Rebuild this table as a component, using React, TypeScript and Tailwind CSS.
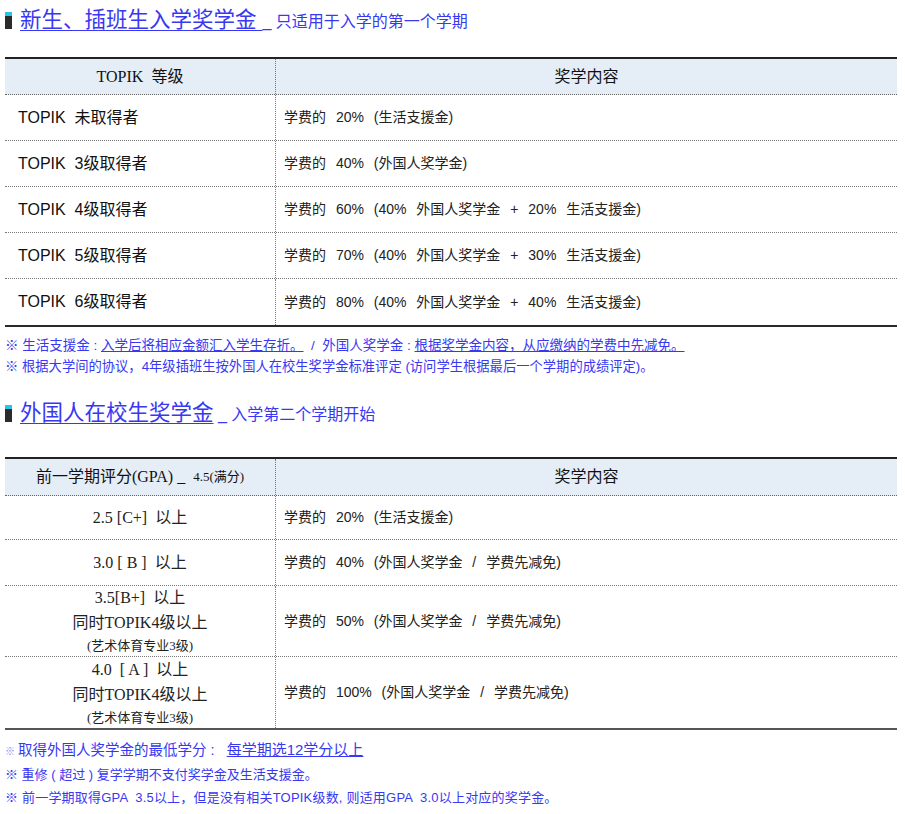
const sans = "font-['Liberation_Sans','Noto_Sans_CJK_SC',sans-serif]";
const serif = "font-['Liberation_Serif','Noto_Sans_CJK_SC',serif]";

const topikRows = [
    { level: "TOPIK  未取得者", content: "学费的 20% (生活支援金)" },
    { level: "TOPIK  3级取得者", content: "学费的 40% (外国人奖学金)" },
    { level: "TOPIK  4级取得者", content: "学费的 60% (40% 外国人奖学金 + 20% 生活支援金)" },
    { level: "TOPIK  5级取得者", content: "学费的 70% (40% 外国人奖学金 + 30% 生活支援金)" },
    { level: "TOPIK  6级取得者", content: "学费的 80% (40% 外国人奖学金 + 40% 生活支援金)" },
];

const gpaRows = [
    { lines: ["2.5 [C+]  以上"], content: "学费的 20% (生活支援金)", h: "h-[44px]" },
    { lines: ["3.0 [ B ]  以上"], content: "学费的 40% (外国人奖学金 / 学费先减免)", h: "h-[46px]" },
    { lines: ["3.5[B+]  以上", "同时TOPIK4级以上"], content: "学费的 50% (外国人奖学金 / 学费先减免)", h: "h-[71px]" },
    { lines: ["4.0  [ A ]  以上", "同时TOPIK4级以上"], content: "学费的 100% (外国人奖学金 / 学费先减免)", h: "h-[71px]" },
];

function SectionTitle({ title, sub }: { title: string; sub: string }) {
    return (
        <div className={`flex items-end text-[#3838f2] ${sans}`}>
            <div className="w-[7px] h-[17px] mr-2 mb-[5px] bg-[#2b2b2b] border-t-[4px] border-[#27c6e8]" />
            <span className="text-[21.5px] leading-[28px] underline underline-offset-[3px] decoration-1 whitespace-pre">{title}</span>
            <span className="text-[16px] leading-[24px] whitespace-pre">{sub}</span>
        </div>
    );
}

export default function App() {
    return (
        <div className={`w-[905px] h-[814px] bg-white px-[5px] pt-[6px] ${sans}`}>
            <SectionTitle title="新生、插班生入学奖学金 " sub="_ 只适用于入学的第一个学期" />

            <div className="w-[892px] mt-[23px] border-t-2 border-[#222] border-b-2 border-b-[#2a2a2a]">
                <div className="flex h-[36px] bg-[#e5edf7] border-b border-dotted border-[#666] text-[16px] text-[#111]">
                    <div className={`w-[271px] flex items-center justify-center border-r border-dotted border-[#777] whitespace-pre ${serif}`}>TOPIK  等级</div>
                    <div className="flex-1 flex items-center justify-center">奖学内容</div>
                </div>
                {topikRows.map((r, i) => (
                    <div key={i} className={`flex h-[46px] ${i < topikRows.length - 1 ? "border-b border-dotted border-[#777]" : ""}`}>
                        <div className="w-[271px] flex items-center pl-[13px] border-r border-dotted border-[#777] text-[16px] text-[#111] whitespace-pre">{r.level}</div>
                        <div className="flex-1 flex items-center pl-[8px] text-[14px] text-[#222] [word-spacing:6px]">{r.content}</div>
                    </div>
                ))}
            </div>

            <div className="mt-[8px] leading-[21px] text-[#3838f2]">
                <p className="text-[13.5px] whitespace-pre">
                    {"※ 生活支援金 : "}
                    <span className="underline">入学后将相应金额汇入学生存折。</span>
                    {"  /  外国人奖学金 : "}
                    <span className="underline">根据奖学金内容，从应缴纳的学费中先减免。</span>
                </p>
                <p className="text-[13.3px] whitespace-pre">※ 根据大学间的协议，4年级插班生按外国人在校生奖学金标准评定 (访问学生根据最后一个学期的成绩评定)。</p>
            </div>

            <div className="mt-[22px]">
                <SectionTitle title="外国人在校生奖学金" sub=" _ 入学第二个学期开始" />
            </div>

            <div className="w-[892px] mt-[30px] border-t-2 border-[#222] border-b-2 border-b-[#555]">
                <div className="flex h-[37px] bg-[#e5edf7] border-b border-dotted border-[#666] text-[#111]">
                    <div className={`w-[271px] flex items-center justify-center border-r border-dotted border-[#777] text-[16px] whitespace-pre ${serif}`}>
                        前一学期评分(GPA) _ <span className="text-[13px] ml-1">4.5(满分)</span>
                    </div>
                    <div className="flex-1 flex items-center justify-center text-[16px]">奖学内容</div>
                </div>
                {gpaRows.map((r, i) => (
                    <div key={i} className={`flex ${r.h} ${i < gpaRows.length - 1 ? "border-b border-dotted border-[#777]" : ""}`}>
                        <div className={`w-[271px] flex flex-col items-center justify-center border-r border-dotted border-[#777] text-[16px] leading-[25px] text-[#222] whitespace-pre ${serif}`}>
                            {r.lines.map((l, j) => (
                                <span key={j}>{l}</span>
                            ))}
                            {r.lines.length > 1 && <span className="text-[13px] leading-[22px]">(艺术体育专业3级)</span>}
                        </div>
                        <div className="flex-1 flex items-center pl-[8px] text-[14px] text-[#222] [word-spacing:6px]">{r.content}</div>
                    </div>
                ))}
            </div>

            <div className="mt-[8px] text-[#3838f2] leading-[23px]">
                <p className="text-[14.5px] whitespace-pre">
                    <span className="text-[10px] text-[#8a8af0] mr-[3px]">※</span>
                    {"取得外国人奖学金的最低学分 :   "}
                    <span className="underline text-[15px]">每学期选12学分以上</span>
                </p>
                <p className="text-[13px] whitespace-pre">※ 重修 ( 超过 ) 复学学期不支付奖学金及生活支援金。</p>
                <p className="text-[13px] tracking-[0.2px] whitespace-pre">※ 前一学期取得GPA  3.5以上，但是没有相关TOPIK级数, 则适用GPA  3.0以上对应的奖学金。</p>
            </div>
        </div>
    );
}
